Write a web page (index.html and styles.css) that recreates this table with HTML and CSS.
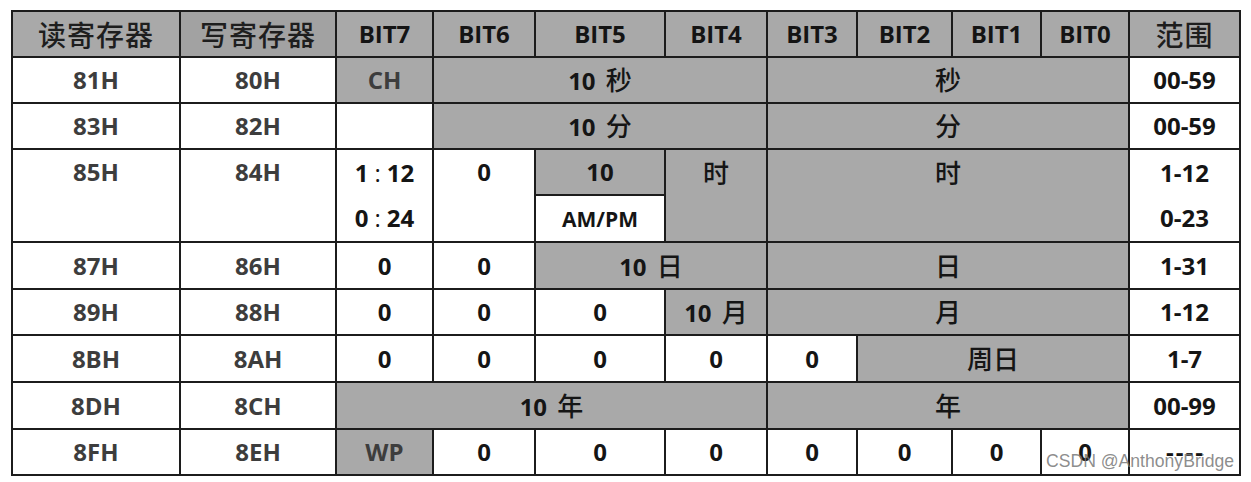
FILE: index.html
```html
<!DOCTYPE html>
<html lang="zh-CN">
<head>
<meta charset="utf-8">
<title>DS1302 寄存器</title>
<link rel="stylesheet" href="styles.css">
</head>
<body>
<div class="page">
<table class="reg">
  <colgroup>
    <col class="c-rd"><col class="c-wr"><col class="c-b7"><col class="c-b6"><col class="c-b5"><col class="c-b4"><col class="c-b3"><col class="c-b2"><col class="c-b1"><col class="c-b0"><col class="c-rg">
  </colgroup>
  <thead>
    <tr class="r-head">
      <th class="cjk">读寄存器</th>
      <th class="cjk dark">写寄存器</th>
      <th>BIT7</th><th>BIT6</th><th>BIT5</th><th>BIT4</th><th>BIT3</th><th>BIT2</th><th>BIT1</th><th>BIT0</th>
      <th class="cjk">范围</th>
    </tr>
  </thead>
  <tbody>
    <tr class="r46">
      <td class="addr">81H</td><td class="addr">80H</td>
      <td class="g addr">CH</td>
      <td class="g" colspan="3">10 <span class="cj sp">秒</span></td>
      <td class="g" colspan="4"><span class="cj">秒</span></td>
      <td>00-59</td>
    </tr>
    <tr class="r46">
      <td class="addr">83H</td><td class="addr">82H</td>
      <td></td>
      <td class="g" colspan="3">10 <span class="cj sp">分</span></td>
      <td class="g" colspan="4"><span class="cj">分</span></td>
      <td>00-59</td>
    </tr>
    <tr class="r46">
      <td class="addr top" rowspan="2">85H</td><td class="addr top" rowspan="2">84H</td>
      <td class="top two" rowspan="2">1<span class="colon">:</span>12<br>0<span class="colon">:</span>24</td>
      <td class="top" rowspan="2">0</td>
      <td class="g">10</td>
      <td class="g top" rowspan="2"><span class="cj">时</span></td>
      <td class="g top" colspan="4" rowspan="2"><span class="cj">时</span></td>
      <td class="top two" rowspan="2">1-12<br>0-23</td>
    </tr>
    <tr class="r47">
      <td class="small">AM/PM</td>
    </tr>
    <tr class="r47">
      <td class="addr">87H</td><td class="addr">86H</td>
      <td>0</td><td>0</td>
      <td class="g" colspan="2">10 <span class="cj sp">日</span></td>
      <td class="g" colspan="4"><span class="cj">日</span></td>
      <td>1-31</td>
    </tr>
    <tr class="r46">
      <td class="addr">89H</td><td class="addr">88H</td>
      <td>0</td><td>0</td><td>0</td>
      <td class="g">10 <span class="cj sp">月</span></td>
      <td class="g" colspan="4"><span class="cj">月</span></td>
      <td>1-12</td>
    </tr>
    <tr class="r47">
      <td class="addr">8BH</td><td class="addr">8AH</td>
      <td>0</td><td>0</td><td>0</td><td>0</td><td>0</td>
      <td class="g" colspan="3"><span class="cj">周日</span></td>
      <td>1-7</td>
    </tr>
    <tr class="r47">
      <td class="addr">8DH</td><td class="addr">8CH</td>
      <td class="g" colspan="4">10 <span class="cj sp">年</span></td>
      <td class="g" colspan="4"><span class="cj">年</span></td>
      <td>00-99</td>
    </tr>
    <tr class="r46">
      <td class="addr">8FH</td><td class="addr">8EH</td>
      <td class="g addr">WP</td>
      <td>0</td><td>0</td><td>0</td><td>0</td><td>0</td><td>0</td><td>0</td>
      <td class="dash">----</td>
    </tr>
  </tbody>
</table>
<div class="watermark">CSDN @AnthonyBridge</div>
</div>
</body>
</html>
```

FILE: styles.css
```css
html, body {
  margin: 0;
  padding: 0;
  background: #ffffff;
}

.page {
  position: relative;
  width: 1251px;
  height: 482px;
  padding: 10px 0 0 11px;
  box-sizing: border-box;
  overflow: hidden;
}

.reg {
  border-collapse: collapse;
  table-layout: fixed;
  width: 1230px;
  font-family: "Open Sans", "Noto Sans CJK SC", sans-serif;
  font-weight: 700;
  font-size: 24px;
  color: #151515;
}

.c-rd { width: 168px; }
.c-wr { width: 156px; }
.c-b7 { width: 97px; }
.c-b6 { width: 102px; }
.c-b5 { width: 130px; }
.c-b4 { width: 102px; }
.c-b3 { width: 90px; }
.c-b2 { width: 95px; }
.c-b1 { width: 89px; }
.c-b0 { width: 88px; }
.c-rg { width: 111px; }

.reg th,
.reg td {
  border: 2px solid #1c1c1c;
  padding: 0;
  text-align: center;
  vertical-align: middle;
  line-height: 30px;
  white-space: nowrap;
  overflow: hidden;
}

.reg th {
  background: #a9a9a9;
  font-weight: 700;
  height: 44px;
  color: #141414;
}

.reg th.dark {
  background: #a2a2a2;
}

.reg th.cjk {
  font-family: "Noto Sans CJK SC", sans-serif;
  font-weight: 500;
  font-size: 28px;
  letter-spacing: 1px;
  color: #1e1e1e;
}

.r46 td { height: 44px; }
.r47 td { height: 45px; }

.reg td.g {
  background: #a9a9a9;
}

.reg td.addr {
  color: #3d3d3d;
}

.reg td.top {
  vertical-align: top;
  padding-top: 7px;
}

.reg td.two {
  line-height: 45px;
  padding-top: 0;
}

.reg td.small {
  font-size: 21px;
}

.cj {
  font-family: "Noto Sans CJK SC", sans-serif;
  font-weight: 500;
  font-size: 26px;
}

.cj.sp {
  margin-left: 4px;
}

.colon {
  display: inline-block;
  padding: 0 6px;
  font-weight: 400;
}

.reg td.dash {
  letter-spacing: 2px;
  padding-left: 2px;
}

.watermark {
  position: absolute;
  left: 1046px;
  top: 450px;
  font-family: "Liberation Sans", Arial, sans-serif;
  font-size: 17.6px;
  line-height: 22px;
  color: rgba(120, 120, 120, 0.85);
  white-space: nowrap;
}
```
